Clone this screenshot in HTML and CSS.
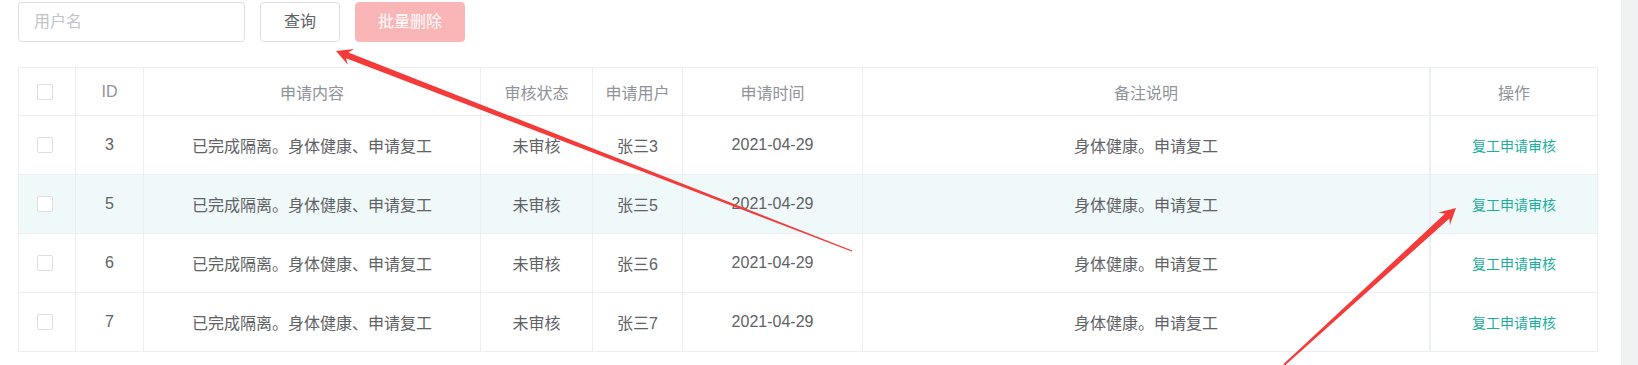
FILE: index.html
```html
<!DOCTYPE html>
<html lang="zh-CN">
<head>
<meta charset="utf-8">
<title>复工申请</title>
<link rel="stylesheet" href="styles.css">
</head>
<body>
<div class="page">
  <main class="main">
    <div class="toolbar">
      <input class="input" type="text" placeholder="用户名">
      <button class="btn btn-default" type="button">查询</button>
      <button class="btn btn-danger" type="button" disabled>批量删除</button>
    </div>

    <div class="table">
      <div class="row head">
        <div class="cell sel"><span class="checkbox"></span></div>
        <div class="cell">ID</div>
        <div class="cell">申请内容</div>
        <div class="cell">审核状态</div>
        <div class="cell">申请用户</div>
        <div class="cell">申请时间</div>
        <div class="cell">备注说明</div>
        <div class="cell fixed">操作</div>
      </div>
      <div class="row">
        <div class="cell sel"><span class="checkbox"></span></div>
        <div class="cell">3</div>
        <div class="cell">已完成隔离。身体健康、申请复工</div>
        <div class="cell">未审核</div>
        <div class="cell">张三3</div>
        <div class="cell">2021-04-29</div>
        <div class="cell">身体健康。申请复工</div>
        <div class="cell fixed"><a class="link">复工申请审核</a></div>
      </div>
      <div class="row hover">
        <div class="cell sel"><span class="checkbox"></span></div>
        <div class="cell">5</div>
        <div class="cell">已完成隔离。身体健康、申请复工</div>
        <div class="cell">未审核</div>
        <div class="cell">张三5</div>
        <div class="cell">2021-04-29</div>
        <div class="cell">身体健康。申请复工</div>
        <div class="cell fixed"><a class="link">复工申请审核</a></div>
      </div>
      <div class="row">
        <div class="cell sel"><span class="checkbox"></span></div>
        <div class="cell">6</div>
        <div class="cell">已完成隔离。身体健康、申请复工</div>
        <div class="cell">未审核</div>
        <div class="cell">张三6</div>
        <div class="cell">2021-04-29</div>
        <div class="cell">身体健康。申请复工</div>
        <div class="cell fixed"><a class="link">复工申请审核</a></div>
      </div>
      <div class="row">
        <div class="cell sel"><span class="checkbox"></span></div>
        <div class="cell">7</div>
        <div class="cell">已完成隔离。身体健康、申请复工</div>
        <div class="cell">未审核</div>
        <div class="cell">张三7</div>
        <div class="cell">2021-04-29</div>
        <div class="cell">身体健康。申请复工</div>
        <div class="cell fixed"><a class="link">复工申请审核</a></div>
      </div>
    </div>
  </main>
  <div class="rail"></div>

  <svg class="annotations" width="1638" height="365" viewBox="0 0 1638 365" aria-hidden="true">
    <polygon class="arrow" points="336,51 347.9,64.7 346,58.3 851.7,251.6 852.3,250.4 348.4,52.4 354,48.9"/>
    <polygon class="arrow" points="1456,208 1438.5,212.5 1444.9,213.7 1283.3,364.3 1284.7,365.7 1449.4,218.5 1449.9,225.1"/>
  </svg>
</div>
</body>
</html>
```

FILE: styles.css
```css
html, body {
  margin: 0;
  padding: 0;
  height: 365px;
  overflow: hidden;
  background: #fff;
}

body {
  font-family: "Liberation Sans", Arial, "Noto Sans CJK SC", sans-serif;
  font-size: 16px;
  color: #606266;
}

.page {
  position: relative;
  display: flex;
  width: 1638px;
  height: 365px;
}

.main {
  width: 1621px;
  padding: 2px 0 0 18px;
  box-sizing: border-box;
}

.rail {
  width: 17px;
  background: #eef0f2;
}

/* toolbar */
.toolbar {
  display: flex;
  gap: 15px;
  height: 40px;
}

.input {
  width: 227px;
  height: 40px;
  box-sizing: border-box;
  border: 1px solid #dcdfe6;
  border-radius: 4px;
  padding: 0 15px;
  font: inherit;
  font-size: 16px;
  color: #606266;
  outline: none;
}

.input::placeholder {
  color: #c0c4cc;
}

.btn {
  height: 40px;
  box-sizing: border-box;
  border-radius: 4px;
  padding: 0 23px;
  font: inherit;
  font-size: 16px;
  line-height: 1;
  cursor: pointer;
}

.btn-default {
  background: #fff;
  border: 1px solid #dcdfe6;
  color: #606266;
}

.btn-danger {
  background: #fab6b6;
  border: 1px solid #fab6b6;
  color: #fff;
  padding: 0 22px;
  cursor: not-allowed;
}

/* table */
.table {
  margin-top: 25px;
  width: 1580px;
  border: 1px solid #ebeef5;
  border-bottom: none;
  box-sizing: border-box;
}

.row {
  display: grid;
  grid-template-columns: 57px 68px 337px 112px 90px 180px 567px 1fr;
  height: 59px;
  border-bottom: 1px solid #ebeef5;
  box-sizing: border-box;
}

.row.head {
  height: 48px;
  color: #909399;
}

.row.hover {
  background: #f0f9f9;
}

.cell {
  display: flex;
  align-items: center;
  justify-content: center;
  border-right: 1px solid #ebeef5;
  white-space: nowrap;
  overflow: hidden;
}

.cell.sel {
  justify-content: flex-start;
  padding-left: 18px;
}

.cell.fixed {
  border-right: none;
  border-left: 1px solid #ebeef5;
}

.checkbox {
  display: block;
  width: 14px;
  height: 14px;
  border: 1px solid #dcdfe6;
  border-radius: 2px;
  background: #fff;
}

.link {
  color: #1aae9c;
  font-size: 14px;
  cursor: pointer;
}

/* annotation arrows drawn over the screenshot */
.annotations {
  position: absolute;
  left: 0;
  top: 0;
  pointer-events: none;
}

.arrow {
  fill: #f53a3a;
}
```
